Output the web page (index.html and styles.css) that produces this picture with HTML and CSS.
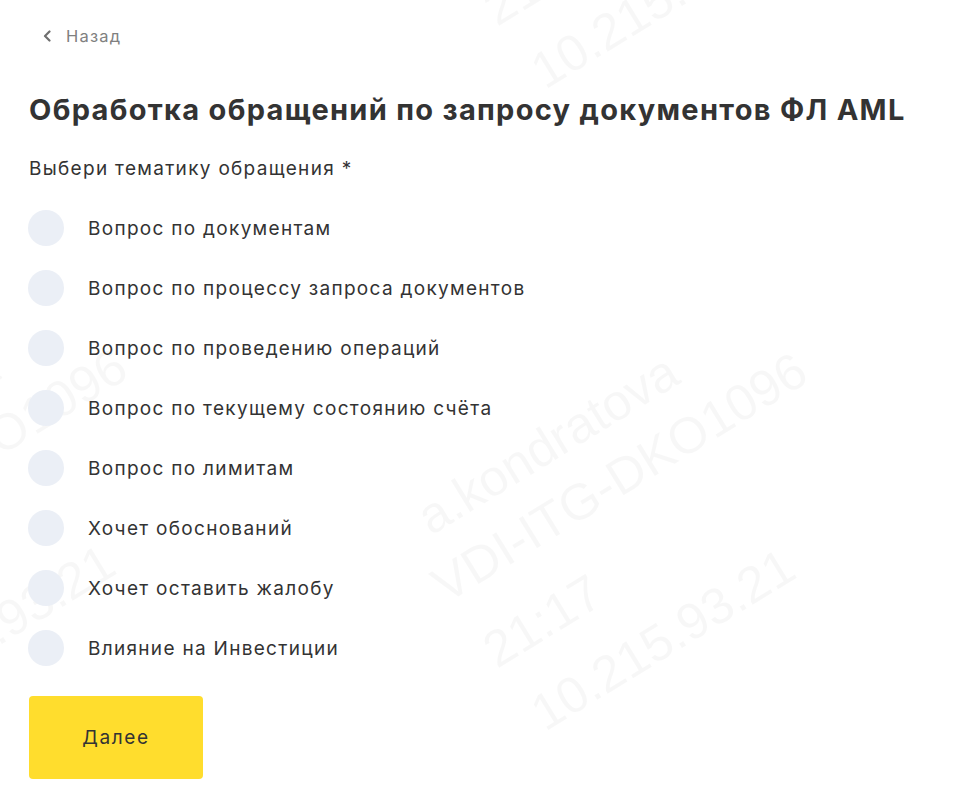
FILE: index.html
```html
<!DOCTYPE html>
<html lang="ru">
<head>
<meta charset="utf-8">
<title>Обработка обращений</title>
<link rel="stylesheet" href="styles.css">
</head>
<body>
<div class="watermarks" aria-hidden="true">
  <div class="wm wm-main">
    <span class="wm-line l1">a.kondratova</span>
    <span class="wm-line l2">VDI-ITG-DKO1096</span>
    <span class="wm-line l3">21:17</span>
    <span class="wm-line l4">10.215.93.21</span>
  </div>
  <div class="wm wm-top">
    <span class="wm-line l1">a.kondratova</span>
    <span class="wm-line l2">VDI-ITG-DKO1096</span>
    <span class="wm-line l3">21:17</span>
    <span class="wm-line l4">10.215.93.21</span>
  </div>
  <div class="wm wm-left">
    <span class="wm-line l1">a.kondratova</span>
    <span class="wm-line l2">VDI-ITG-DKO1096</span>
    <span class="wm-line l3">21:17</span>
    <span class="wm-line l4">10.215.93.21</span>
  </div>
</div>
<main class="page">
  <a class="back" href="#">
    <svg class="back-icon" width="10" height="12" viewBox="0 0 10 12"><path d="M7.5 1.5 L3 6 L7.5 10.5" fill="none" stroke="#6f6f6f" stroke-width="2.2" stroke-linecap="round" stroke-linejoin="round"/></svg>
    <span>Назад</span>
  </a>
  <h1 class="title">Обработка обращений по запросу документов ФЛ AML</h1>
  <div class="label">Выбери тематику обращения *</div>
  <div class="options">
    <label class="option"><span class="radio"></span><span class="option-text">Вопрос по документам</span></label>
    <label class="option"><span class="radio"></span><span class="option-text">Вопрос по процессу запроса документов</span></label>
    <label class="option"><span class="radio"></span><span class="option-text">Вопрос по проведению операций</span></label>
    <label class="option"><span class="radio"></span><span class="option-text">Вопрос по текущему состоянию счёта</span></label>
    <label class="option"><span class="radio"></span><span class="option-text">Вопрос по лимитам</span></label>
    <label class="option"><span class="radio"></span><span class="option-text">Хочет обоснований</span></label>
    <label class="option"><span class="radio"></span><span class="option-text">Хочет оставить жалобу</span></label>
    <label class="option"><span class="radio"></span><span class="option-text">Влияние на Инвестиции</span></label>
  </div>
  <button class="next" type="button">Далее</button>
</main>
</body>
</html>
```
FILE: styles.css
```css
html, body {
  margin: 0;
  padding: 0;
  background: #ffffff;
}
body {
  font-family: Inter, "Liberation Sans", Arial, sans-serif;
  color: #333333;
  position: relative;
  min-height: 805px;
  overflow: hidden;
}
.page {
  position: relative;
  z-index: 1;
  padding: 24px 28px 0 28px;
  display: flex;
  flex-direction: column;
  align-items: flex-start;
}
.back {
  display: flex;
  align-items: center;
  gap: 14px;
  height: 24px;
  margin-left: 14px;
  color: #808080;
  text-decoration: none;
  font-size: 16.5px;
  letter-spacing: 1.2px;
}
.back-icon {
  display: block;
}
.title {
  margin: 44px 0 0 1px;
  font-size: 29px;
  line-height: 36px;
  font-weight: 700;
  letter-spacing: 1.3px;
  color: #333333;
}
.label {
  margin: 29px 0 0 1px;
  font-size: 19px;
  line-height: 24px;
  letter-spacing: 1.3px;
}
.options {
  margin-top: 29px;
  display: flex;
  flex-direction: column;
  gap: 24px;
}
.option {
  display: flex;
  align-items: center;
  gap: 24px;
  height: 36px;
  font-size: 19px;
  letter-spacing: 1.3px;
  cursor: pointer;
}
.radio {
  width: 36px;
  height: 36px;
  border-radius: 50%;
  background: #ebeff6;
  flex: none;
}
.next {
  margin: 30px 0 0 1px;
  width: 174px;
  height: 83px;
  border: none;
  border-radius: 4px;
  background: #ffdd2d;
  color: #333333;
  font-family: inherit;
  font-size: 19px;
  letter-spacing: 1.6px;
  cursor: pointer;
}
.watermarks {
  position: absolute;
  inset: 0;
  pointer-events: none;
  z-index: 0;
}
.wm {
  position: absolute;
  left: 0;
  top: 0;
  width: 0;
  height: 0;
}
.wm-top { transform: translate(0, -642px); }
.wm-left { transform: translate(-680px, -4px); }
.wm-line {
  position: absolute;
  white-space: nowrap;
  font-family: "Liberation Sans", Arial, sans-serif;
  font-size: 51px;
  line-height: 1;
  color: rgba(0, 0, 0, 0.03);
  transform-origin: 0 43px;
  transform: rotate(-31.5deg);
}
.l1 { left: 431px; top: 493px; }
.l2 { left: 446px; top: 561px; }
.l3 { left: 497px; top: 626px; }
.l4 { left: 545px; top: 689px; }
```
